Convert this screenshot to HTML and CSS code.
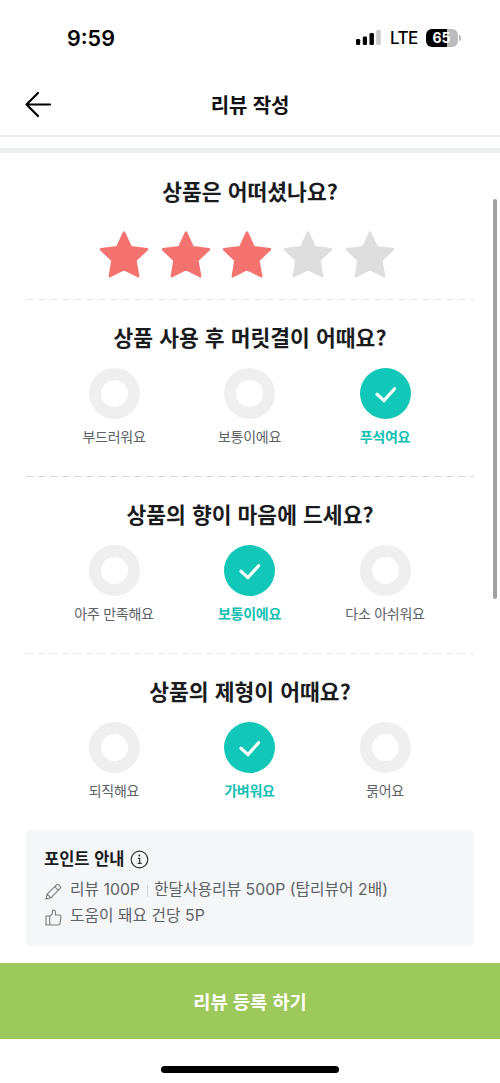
FILE: index.html
```html
<!DOCTYPE html>
<html lang="ko">
<head>
<meta charset="utf-8">
<title>리뷰 작성</title>
<link rel="stylesheet" href="styles.css">
</head>
<body>
<svg class="defs" width="0" height="0" aria-hidden="true">
  <symbol id="star" viewBox="0 0 50 48"><path d="M25 2.5 L31.8 17.3 L48 19.3 L36.4 30.5 L39.2 46.2 L25 39.2 L10.8 46.2 L13.4 30.5 L2 19.3 L18.2 17.3 Z" fill="currentColor" stroke="currentColor" stroke-width="2.4" stroke-linejoin="round"/></symbol>
  <symbol id="check" viewBox="0 0 51 51"><path d="M17 26.3 L24 32.6 L34.6 20.8" fill="none" stroke="#fff" stroke-width="3.2" stroke-linecap="round" stroke-linejoin="miter"/></symbol>
</svg>
<div class="screen">
  <div class="status">
    <span class="time">9:59</span>
    <div class="indicators">
      <svg class="signal" width="26" height="17" viewBox="0 0 26 17"><rect x="0" y="10" width="4.2" height="6" rx="1.3"/><rect x="6.8" y="7.6" width="4.2" height="8.4" rx="1.3"/><rect x="13.5" y="4" width="4.4" height="12" rx="1.3"/><rect x="20.2" y="1" width="4.6" height="15" rx="1.3" fill="#ccc"/></svg>
      <span class="network">LTE</span>
      <div class="battery"><span>65</span></div>
      <i class="battery-tip"></i>
    </div>
  </div>
  <header class="header">
    <svg class="back" width="28" height="28" viewBox="0 0 28 28"><path d="M26 13.5 H2.5 M14 2 L2.5 13.5 L14 25" fill="none" stroke="#000" stroke-width="2.2" stroke-linecap="round" stroke-linejoin="round"/></svg>
    <h1>리뷰 작성</h1>
  </header>
  <div class="band"></div>
  <main class="form">
    <section class="rating">
      <h2>상품은 어떠셨나요?</h2>
      <div class="stars">
        <svg class="on"><use href="#star"/></svg>
        <svg class="on"><use href="#star"/></svg>
        <svg class="on"><use href="#star"/></svg>
        <svg><use href="#star"/></svg>
        <svg><use href="#star"/></svg>
      </div>
    </section>
    <div class="dash light"></div>
    <section class="question">
      <h2>상품 사용 후 머릿결이 어때요?</h2>
      <div class="options">
        <div class="option"><i class="ring"></i><span>부드러워요</span></div>
        <div class="option"><i class="ring"></i><span>보통이에요</span></div>
        <div class="option selected"><svg class="tick"><use href="#check"/></svg><span>푸석여요</span></div>
      </div>
    </section>
    <div class="dash"></div>
    <section class="question">
      <h2>상품의 향이 마음에 드세요?</h2>
      <div class="options">
        <div class="option"><i class="ring"></i><span>아주 만족해요</span></div>
        <div class="option selected"><svg class="tick"><use href="#check"/></svg><span>보통이에요</span></div>
        <div class="option"><i class="ring"></i><span>다소 아쉬워요</span></div>
      </div>
    </section>
    <div class="dash light"></div>
    <section class="question">
      <h2>상품의 제형이 어때요?</h2>
      <div class="options">
        <div class="option"><i class="ring"></i><span>되직해요</span></div>
        <div class="option selected"><svg class="tick"><use href="#check"/></svg><span>가벼워요</span></div>
        <div class="option"><i class="ring"></i><span>묽어요</span></div>
      </div>
    </section>
    <aside class="points">
      <h3><span>포인트 안내</span><svg width="19" height="19" viewBox="0 0 19 19"><circle cx="9.5" cy="9.5" r="8.3" fill="none" stroke="#333" stroke-width="1.2"/><circle cx="9.3" cy="5.6" r="1" fill="#333"/><path d="M8 8.4h1.7v4.7M7.7 13.3h4" fill="none" stroke="#333" stroke-width="1.2"/></svg></h3>
      <p><svg width="17" height="17" viewBox="0 0 17 17"><path d="M1 16 L2.2 11.2 L11.8 1.6 Q12.6 .9 13.4 1.6 L15.4 3.6 Q16 4.4 15.4 5.2 L5.8 14.8 Z M9.8 3.7 L13.2 7.1 M2.2 11.2 L5.8 14.8" fill="none" stroke="#777c80" stroke-width="1.1" stroke-linejoin="round"/></svg><span>리뷰 100P</span><i class="sep"></i><span>한달사용리뷰 500P (탑리뷰어 2배)</span></p>
      <p><svg width="17" height="17" viewBox="0 0 17 17"><path d="M1 7h3.7v9H1z M4.7 7.3 L7.4 4.8 V2.4 Q7.5 .9 8.8 1 Q10.5 1.1 10.5 3 V6 H14.4 Q16.2 6.1 16 7.8 L15 14.3 Q14.7 16 13 16 H4.7" fill="none" stroke="#777c80" stroke-width="1.1" stroke-linejoin="round"/></svg><span>도움이 돼요 건당 5P</span></p>
    </aside>
    <i class="scrollbar"></i>
  </main>
  <button class="submit">리뷰 등록 하기</button>
  <div class="home"><i></i></div>
</div>
</body>
</html>
```
FILE: styles.css
```css
* { box-sizing: border-box; }
body { margin: 0; background: #fff; font-family: Inter, "Noto Sans CJK KR", sans-serif; color: #191b1d; }
h1, h2, h3, p { margin: 0; white-space: nowrap; }
.defs { position: absolute; }
.screen { width: 500px; height: 1083px; display: flex; flex-direction: column; overflow: hidden; }
.status { height: 75px; padding: 0 39px 0 67px; display: flex; align-items: center; justify-content: space-between; color: #000; }
.time { font-size: 21.5px; font-weight: 600; line-height: 24px; }
.indicators { display: flex; align-items: center; }
.signal { margin-right: 8px; }
.network { font-size: 17px; font-weight: 450; letter-spacing: -.6px; width: 36px; }
.battery { width: 32px; height: 18px; border-radius: 6px; background: linear-gradient(90deg, #000 65%, #bbb 65%); color: #fff; font-size: 14px; font-weight: 700; line-height: 18px; text-align: center; padding-right: 1px; }
.battery-tip { width: 2px; height: 6px; margin-left: 1px; border-radius: 0 2px 2px 0; background: #bbb; }
.header { height: 62px; padding: 0 24px; border-bottom: 2px solid #ececed; display: grid; grid-template-columns: 28px 1fr 28px; align-items: center; }
h1 { font: 700 20px/28px "Noto Sans CJK KR", sans-serif; letter-spacing: -.1px; text-align: center; color: #111; }
.band { height: 5px; margin-top: 11px; background: #eef0f0; }
.form { height: 793px; position: relative; padding: 0 26px; display: flex; flex-direction: column; }
h2 { font: 700 21.5px/32px "Noto Sans CJK KR", sans-serif; letter-spacing: .03px; text-align: center; }
.rating { height: 146px; padding-top: 22px; }
.stars { display: flex; justify-content: center; gap: 11.3px; margin: 23px 6px 0 0; }
.stars svg { width: 50px; height: 48px; color: #dedede; }
.stars .on { color: #f4736f; }
.dash { height: 1px; background: repeating-linear-gradient(90deg, #d6d6d6 0 7px, transparent 7px 12px); }
.dash.light { background: repeating-linear-gradient(90deg, #e9e9e9 0 7px, transparent 7px 12px); }
.question { height: 176px; padding-top: 21px; }
.options { display: grid; grid-template-columns: repeat(3, 135.5px); justify-content: center; margin: 15px 1px 0 0; }
.option { display: flex; flex-direction: column; align-items: center; font: 400 14px/22px "Noto Sans CJK KR", sans-serif; letter-spacing: -.25px; color: #5c6165; }
.option span { margin-top: 6px; white-space: nowrap; }
.ring { width: 51px; height: 51px; border: 12.5px solid #efefef; border-radius: 50%; }
.tick { width: 51px; height: 51px; border-radius: 50%; background: #11c7b8; }
.selected { color: #11c0b2; font-weight: 700; }
.points { height: 116px; border-radius: 4px; background: #f4f6f8; padding: 16px 18px; color: #5d6266; }
h3 { display: flex; align-items: center; gap: 5px; font: 700 16.5px/24px "Noto Sans CJK KR", sans-serif; color: #191b1d; margin-bottom: 7px; }
h3 svg { margin-top: 2px; }
.points p { display: flex; align-items: center; height: 26px; font-size: 15.8px; line-height: 26px; }
.points p svg { margin: 3px 8px 0 1px; }
.sep { width: 1px; height: 12px; margin: 2px 6px 0 7px; background: #d5d8da; }
.scrollbar { position: absolute; right: 3px; top: 46px; width: 4px; height: 400px; border-radius: 2px; background: #a1a1a1; }
.submit { height: 76px; margin-top: 17px; border: 0; padding: 0; background: #9dc85c; color: #fff; font: 700 18.7px/28px "Noto Sans CJK KR", sans-serif; }
.home { flex: 1; display: flex; justify-content: center; padding-top: 27px; }
.home i { width: 178px; height: 7px; border-radius: 4px; background: #000; }
```
